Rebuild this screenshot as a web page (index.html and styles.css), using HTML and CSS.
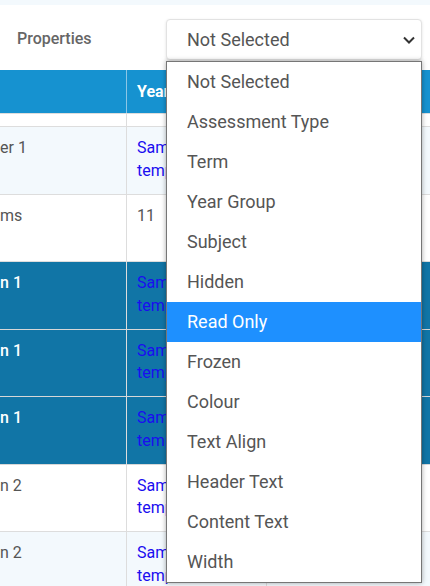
FILE: index.html
```html
<!DOCTYPE html>
<html>
<head>
<meta charset="utf-8">
<link rel="stylesheet" href="styles.css">
</head>
<body>
<div class="band"></div>
<div class="toolbar">
  <div class="label">Properties</div>
  <div class="select">
    <span>Not Selected</span>
    <svg class="chev" width="12" height="8" viewBox="0 0 12 8"><path d="M1 1.5 L6 6.5 L11 1.5" fill="none" stroke="#333" stroke-width="2"/></svg>
  </div>
</div>
<div class="grid">
  <table>
    <colgroup><col class="c1"><col class="c2"><col class="c3"></colgroup>
    <thead>
      <tr><th></th><th>Year Group</th><th>Subject</th></tr>
    </thead>
    <tbody>
      <tr class="spacer"><td></td><td></td><td></td></tr>
      <tr class="light"><td>er 1</td><td><a href="#">Sample<br>template</a></td><td>Maths</td></tr>
      <tr class="white"><td>ms</td><td>11</td><td>English</td></tr>
      <tr class="dark"><td>n 1</td><td><a href="#">Sample<br>template</a></td><td>Science</td></tr>
      <tr class="dark"><td>n 1</td><td><a href="#">Sample<br>template</a></td><td>History</td></tr>
      <tr class="dark"><td>n 1</td><td><a href="#">Sample<br>template</a></td><td>Geography</td></tr>
      <tr class="white"><td>n 2</td><td><a href="#">Sample<br>template</a></td><td>Art</td></tr>
      <tr class="light"><td>n 2</td><td><a href="#">Sample<br>template</a></td><td>Music</td></tr>
    </tbody>
  </table>
</div>
<ul class="menu">
  <li>Not Selected</li>
  <li>Assessment Type</li>
  <li>Term</li>
  <li>Year Group</li>
  <li>Subject</li>
  <li>Hidden</li>
  <li class="active">Read Only</li>
  <li>Frozen</li>
  <li>Colour</li>
  <li>Text Align</li>
  <li>Header Text</li>
  <li>Content Text</li>
  <li>Width</li>
</ul>
</body>
</html>
```
FILE: styles.css
```css
html, body {
  margin: 0;
  padding: 0;
  background: #fff;
  font-family: Roboto, "Liberation Sans", sans-serif;
  overflow: hidden;
  width: 430px;
  height: 586px;
}
.band {
  height: 5px;
  background: #f3f9fd;
}
.toolbar {
  height: 65px;
  display: flex;
  align-items: flex-start;
  box-sizing: border-box;
  padding-top: 14px;
}
.label {
  width: 149px;
  padding-left: 17px;
  box-sizing: content-box;
  height: 41px;
  line-height: 40px;
  font-size: 16px;
  font-weight: 500;
  color: #666;
}
.select {
  width: 256px;
  height: 41px;
  box-sizing: border-box;
  border: 1px solid #e2e2e2;
  border-radius: 4px;
  box-shadow: 0 1px 3px rgba(0,0,0,0.12);
  display: flex;
  align-items: center;
  justify-content: space-between;
  padding: 0 6px 0 20px;
  font-size: 18px;
  color: #555;
  background: #fff;
}
.chev { display: block; margin-top: 1px; }
.grid {
  width: 430px;
  overflow: hidden;
}
table {
  border-collapse: separate;
  border-spacing: 0;
  table-layout: fixed;
  width: 640px;
  font-size: 16px;
}
col.c1 { width: 127px; }
col.c2 { width: 140px; }
col.c3 { width: 373px; }
th {
  height: 43px;
  box-sizing: border-box;
  background: #1692d0;
  color: #fff;
  font-weight: 700;
  text-align: left;
  padding: 0 10px;
  border-right: 1px solid #8cc6e6;
  white-space: nowrap;
  overflow: hidden;
}
td {
  height: 45.714px;
  padding: 10px 10px 10.8px;
  line-height: 22.857px;
  vertical-align: top;
  border-bottom: 1px solid #ddd;
  border-right: 1px solid #ddd;
  color: #555;
  white-space: nowrap;
  overflow: hidden;
}
td:first-child { padding-left: 0; }
tr.spacer td {
  height: 12px;
  padding: 0;
  border-top: 1px solid #ddd;
  line-height: 0;
}
tr.light td { background: #f3f9fd; }
tr.white td { background: #fff; }
tr.dark td { background: #1175a6; border-bottom-color: #d7d7d7; }
tr.dark td:first-child { color: #fff; font-weight: 500; }
td a { color: #1a0df0; text-decoration: none; }
.menu {
  position: absolute;
  left: 166px;
  top: 61px;
  width: 256px;
  margin: 0;
  padding: 0;
  list-style: none;
  box-sizing: border-box;
  border: 1px solid #767676;
  background: #fff;
  box-shadow: 0 0 5px rgba(0,0,0,0.35);
}
.menu li {
  height: 40px;
  line-height: 40px;
  padding-left: 20px;
  font-size: 18px;
  color: #555;
}
.menu li.active {
  background: #1e90ff;
  color: #fff;
}
```
